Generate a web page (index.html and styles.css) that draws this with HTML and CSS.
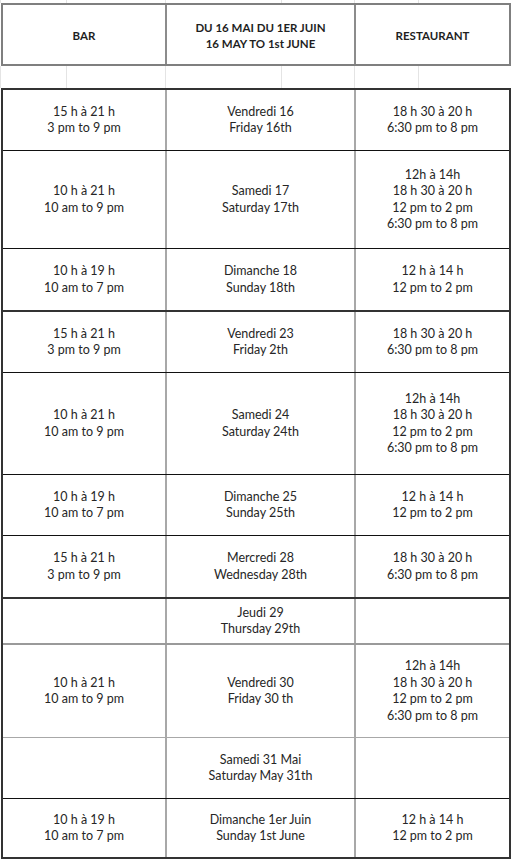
FILE: index.html
```html
<!DOCTYPE html>
<html lang="fr">
<head>
<meta charset="utf-8">
<title>Horaires</title>
<link rel="stylesheet" href="styles.css">
</head>
<body>
<div class="sheet">
  <div class="grid-gap top"><span></span><span></span><span></span><span></span><span></span><span></span></div>
  <div class="head">
    <div class="hcell">BAR</div>
    <div class="hcell">DU 16 MAI DU 1ER JUIN<br>16 MAY TO 1st JUNE</div>
    <div class="hcell">RESTAURANT</div>
  </div>
  <div class="grid-gap"><span></span><span></span><span></span><span></span><span></span><span></span></div>
  <div class="body">
    <div class="row h61 b-black">
      <div class="cell">15 h à 21 h<br>3 pm to 9 pm</div>
      <div class="cell">Vendredi 16<br>Friday 16th</div>
      <div class="cell">18 h 30 à 20 h<br>6:30 pm to 8 pm</div>
    </div>
    <div class="row h98 b-black">
      <div class="cell">10 h à 21 h<br>10 am to 9 pm</div>
      <div class="cell">Samedi 17<br>Saturday 17th</div>
      <div class="cell">12h à 14h<br>18 h 30 à 20 h<br>12 pm to 2 pm<br>6:30 pm to 8 pm</div>
    </div>
    <div class="row h63 b-thick">
      <div class="cell">10 h à 19 h<br>10 am to 7 pm</div>
      <div class="cell">Dimanche 18<br>Sunday 18th</div>
      <div class="cell">12 h à 14 h<br>12 pm to 2 pm</div>
    </div>
    <div class="row h61 b-black">
      <div class="cell">15 h à 21 h<br>3 pm to 9 pm</div>
      <div class="cell">Vendredi 23<br>Friday 2th</div>
      <div class="cell">18 h 30 à 20 h<br>6:30 pm to 8 pm</div>
    </div>
    <div class="row h102 b-black">
      <div class="cell">10 h à 21 h<br>10 am to 9 pm</div>
      <div class="cell">Samedi 24<br>Saturday 24th</div>
      <div class="cell">12h à 14h<br>18 h 30 à 20 h<br>12 pm to 2 pm<br>6:30 pm to 8 pm</div>
    </div>
    <div class="row h61 b-black">
      <div class="cell">10 h à 19 h<br>10 am to 7 pm</div>
      <div class="cell">Dimanche 25<br>Sunday 25th</div>
      <div class="cell">12 h à 14 h<br>12 pm to 2 pm</div>
    </div>
    <div class="row h63 b-thick">
      <div class="cell">15 h à 21 h<br>3 pm to 9 pm</div>
      <div class="cell">Mercredi 28<br>Wednesday 28th</div>
      <div class="cell">18 h 30 à 20 h<br>6:30 pm to 8 pm</div>
    </div>
    <div class="row h46 b-gray2">
      <div class="cell"></div>
      <div class="cell">Jeudi 29<br>Thursday 29th</div>
      <div class="cell"></div>
    </div>
    <div class="row h93 b-gray1">
      <div class="cell">10 h à 21 h<br>10 am to 9 pm</div>
      <div class="cell">Vendredi 30<br>Friday 30 th</div>
      <div class="cell">12h à 14h<br>18 h 30 à 20 h<br>12 pm to 2 pm<br>6:30 pm to 8 pm</div>
    </div>
    <div class="row h61 b-black">
      <div class="cell"></div>
      <div class="cell">Samedi 31 Mai<br>Saturday May 31th</div>
      <div class="cell"></div>
    </div>
    <div class="row h58">
      <div class="cell">10 h à 19 h<br>10 am to 7 pm</div>
      <div class="cell">Dimanche 1er Juin<br>Sunday 1st June</div>
      <div class="cell">12 h à 14 h<br>12 pm to 2 pm</div>
    </div>
  </div>
</div>
</body>
</html>
```

FILE: styles.css
```css
html, body {
  margin: 0;
  padding: 0;
  background: #ffffff;
}

body {
  font-family: "Lato", "Open Sans", "Liberation Sans", sans-serif;
  color: #262626;
}

.sheet {
  width: 512px;
  display: flex;
  flex-direction: column;
}

.grid-gap {
  height: 22px;
  display: grid;
  grid-template-columns: 1px 66px 99px 116px 73px 64px 1fr;
}

.grid-gap.top {
  height: 3px;
}

.grid-gap span {
  border-right: 1px solid #e4e4e4;
}

.head {
  margin-left: 1px;
  width: 510px;
  height: 63px;
  box-sizing: border-box;
  border: 2px solid #7f7f7f;
  display: grid;
  grid-template-columns: 164px 189px 1fr;
}

.hcell {
  display: flex;
  align-items: center;
  justify-content: center;
  text-align: center;
  font-weight: 700;
  font-size: 11.5px;
  line-height: 16px;
  padding-top: 3px;
  color: #1f1f1f;
  border-right: 2px solid #8c8c8c;
}

.hcell:last-child {
  border-right: none;
}

.body {
  margin-left: 1px;
  width: 510px;
  box-sizing: border-box;
  border: 2px solid #333333;
  display: flex;
  flex-direction: column;
}

.row {
  box-sizing: border-box;
  display: grid;
  grid-template-columns: 164px 189px 1fr;
}

.cell {
  display: flex;
  align-items: center;
  justify-content: center;
  text-align: center;
  font-size: 12.5px;
  line-height: 16.5px;
  border-right: 2px solid #a8a8a8;
}

.cell:last-child {
  border-right: none;
}

.b-black { border-bottom: 1px solid #111111; }
.b-thick { border-bottom: 2px solid #333333; }
.b-gray2 { border-bottom: 2px solid #9a9a9a; }
.b-gray1 { border-bottom: 1px solid #a8a8a8; }

.h46 { height: 46px; }
.h58 { height: 58px; }
.h61 { height: 61px; }
.h63 { height: 63px; }
.h93 { height: 93px; }
.h98 { height: 98px; }
.h102 { height: 102px; }
```
